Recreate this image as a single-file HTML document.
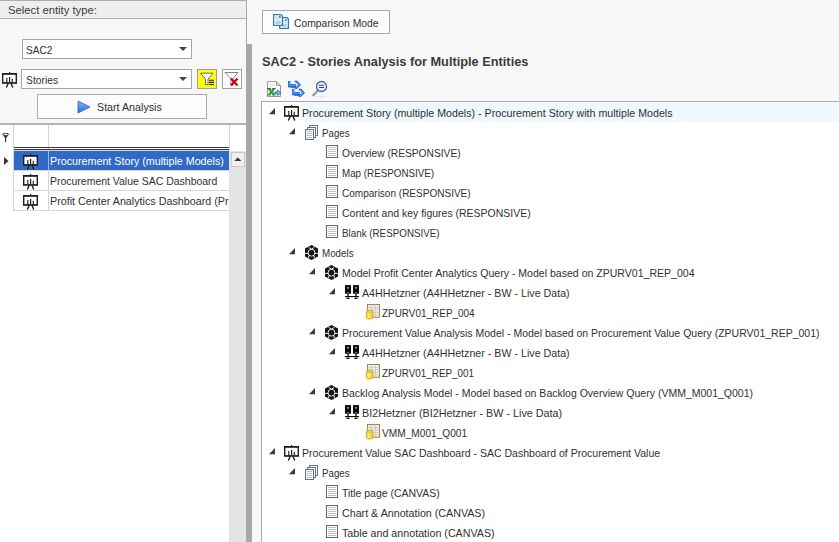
<!DOCTYPE html><html><head><meta charset="utf-8"><style>
*{margin:0;padding:0;box-sizing:border-box}
html,body{width:839px;height:542px;overflow:hidden;background:#f8f8f8;position:relative;font-family:"Liberation Sans",sans-serif}
.a{position:absolute}
.t{position:absolute;white-space:nowrap;transform-origin:0 0}
svg{position:absolute;display:block}

</style></head><body>
<div class="a" style="left:0;top:0;width:247px;height:124px;background:#f7f7f7;border-right:1px solid #a9a9a9"></div>
<div class="a" style="left:0;top:0;width:246px;height:19px;background:#eeeeee;border-top:1px solid #acacac;border-bottom:1px solid #acacac"></div>
<div class="t" style="left:8.00px;top:2px;line-height:17px;font:11px/17px 'Liberation Sans', sans-serif;color:#3c3c3c;transform:scaleX(1.0234);">Select entity type:</div>
<div class="a" style="left:22px;top:39px;width:170px;height:20px;background:#fff;border:1px solid #a5a5a5"></div>
<svg style="left:179px;top:47px" width="8" height="4"><path d="M0 0H8L4 4Z" fill="#444"/></svg>
<div class="t" style="left:26.30px;top:41px;line-height:18px;font:11px/18px 'Liberation Sans', sans-serif;color:#303030;transform:scaleX(0.9190);">SAC2</div>
<div class="a" style="left:21px;top:69px;width:171px;height:20px;background:#fff;border:1px solid #a5a5a5"></div>
<svg style="left:179px;top:77px" width="8" height="4"><path d="M0 0H8L4 4Z" fill="#444"/></svg>
<div class="t" style="left:25.60px;top:71px;line-height:18px;font:11px/18px 'Liberation Sans', sans-serif;color:#303030;transform:scaleX(0.9385);">Stories</div>
<svg style="left:2px;top:71px" width="16" height="17" viewBox="0 0 16 17"><g fill="#1e1e1e"><rect x="7" y="1" width="1.2" height="2"/><rect x="0" y="2" width="15" height="10.8"/></g><rect x="1.4" y="3.8" width="12.2" height="7.3" fill="#fff"/><g fill="#1e1e1e"><rect x="4.1" y="7" width="1.3" height="4.2"/><rect x="7" y="6" width="1.2" height="5.2"/><rect x="9.7" y="7.8" width="1.3" height="3.4"/></g><g fill="#888"><rect x="4.4" y="7.8" width="0.6" height="2.5"/><rect x="10" y="8.6" width="0.6" height="1.8"/></g><path d="M6 12.8 L4.6 16 M9.2 12.8 L10.6 16" stroke="#1e1e1e" stroke-width="1.4" stroke-linecap="round"/></svg>
<div class="a" style="left:197px;top:69px;width:20px;height:20px;background:#ffff00;border:1px solid #9b9bb8"></div>
<svg style="left:197px;top:69px" width="20" height="20" viewBox="0 0 20 20"><path d="M3.5 4.2 H16 L11 10 V15.5 H8.5 V10 Z" fill="#fff" stroke="#55557a" stroke-width="0.9"/><g stroke="#222" stroke-width="1.1"><path d="M12 11.3H17M12 13.4H17M12 15.5H17"/></g></svg>
<div class="a" style="left:222px;top:69px;width:20px;height:20px;background:#fff;border:1px solid #a0a0a0"></div>
<svg style="left:222px;top:69px" width="20" height="20" viewBox="0 0 20 20"><path d="M3 3.5 H16 L11 9.5 V16 H8.8 V9.5 Z" fill="#fff" stroke="#777" stroke-width="0.9"/><path d="M9 9.5 L15.5 16.5 M15.5 9.5 L9 16.5" stroke="#d40000" stroke-width="2.2"/></svg>
<div class="a" style="left:37px;top:94px;width:170px;height:25px;background:#fcfcfc;border:1px solid #ababab"></div>
<svg style="left:77px;top:100px" width="14" height="14" viewBox="0 0 14 14"><defs><linearGradient id="pg" x1="0" y1="0" x2="0" y2="1"><stop offset="0" stop-color="#7ab8f5"/><stop offset="1" stop-color="#2a72d8"/></linearGradient></defs><path d="M1 1 L13 7 L1 13 Z" fill="url(#pg)" stroke="#2a62c0" stroke-width="0.8"/></svg>
<div class="t" style="left:96.50px;top:97px;line-height:20px;font:11px/20px 'Liberation Sans', sans-serif;color:#303030;transform:scaleX(0.9727);">Start Analysis</div>
<div class="a" style="left:0;top:123px;width:246px;height:2px;background:#b4b4b4"></div>
<div class="a" style="left:0;top:125px;width:246px;height:417px;background:#fff"></div>
<div class="a" style="left:229px;top:151px;width:17px;height:391px;background:#e4e4e4"></div>
<div class="a" style="left:231px;top:152px;width:14px;height:15px;background:#efefef;border:1px solid #c8c8c8"></div>
<svg style="left:234px;top:157px" width="8" height="5"><path d="M0.3 4H7.3L3.8 0.6Z" fill="#333"/></svg>
<div class="a" style="left:13px;top:125px;width:1px;height:86px;background:#d4d4d4"></div>
<div class="a" style="left:48px;top:125px;width:1px;height:86px;background:#d4d4d4"></div>
<div class="a" style="left:229px;top:125px;width:1px;height:26px;background:#d4d4d4"></div>
<div class="a" style="left:14px;top:147px;width:215px;height:1px;background:#3a3a3a"></div>
<div class="a" style="left:14px;top:149px;width:215px;height:1px;background:#3a3a3a"></div>
<div class="a" style="left:14px;top:150px;width:215px;height:1px;background:#d8d8d8"></div>
<svg style="left:2px;top:133px" width="8" height="10" viewBox="0 0 8 10"><ellipse cx="3.6" cy="1.3" rx="3.2" ry="1.1" fill="none" stroke="#333" stroke-width="1"/><path d="M0.8 2 L3 5 V9 H4.2 V5 L6.4 2 Q3.6 3.3 0.8 2Z" fill="#333"/></svg>
<div class="a" style="left:14px;top:151px;width:215px;height:19px;background:#316ac5"></div>
<div class="a" style="left:48px;top:151px;width:1px;height:19px;background:#9ab4e0"></div>
<div class="a" style="left:14px;top:170px;width:215px;height:1px;background:#d8d8d8"></div>
<div class="a" style="left:14px;top:190px;width:215px;height:1px;background:#d8d8d8"></div>
<div class="a" style="left:14px;top:210px;width:215px;height:1px;background:#d8d8d8"></div>
<svg style="left:4px;top:157px" width="5" height="8"><path d="M0 0L4.5 4L0 8Z" fill="#333"/></svg>
<svg style="left:23px;top:153px" width="16" height="17" viewBox="0 0 16 17"><g fill="#1e1e1e"><rect x="7" y="1" width="1.2" height="2"/><rect x="0" y="2" width="15" height="10.8"/></g><rect x="1.4" y="3.8" width="12.2" height="7.3" fill="#fff"/><g fill="#1e1e1e"><rect x="4.1" y="7" width="1.3" height="4.2"/><rect x="7" y="6" width="1.2" height="5.2"/><rect x="9.7" y="7.8" width="1.3" height="3.4"/></g><g fill="#888"><rect x="4.4" y="7.8" width="0.6" height="2.5"/><rect x="10" y="8.6" width="0.6" height="1.8"/></g><path d="M6 12.8 L4.6 16 M9.2 12.8 L10.6 16" stroke="#1e1e1e" stroke-width="1.4" stroke-linecap="round"/></svg>
<svg style="left:23px;top:173px" width="16" height="17" viewBox="0 0 16 17"><g fill="#1e1e1e"><rect x="7" y="1" width="1.2" height="2"/><rect x="0" y="2" width="15" height="10.8"/></g><rect x="1.4" y="3.8" width="12.2" height="7.3" fill="#fff"/><g fill="#1e1e1e"><rect x="4.1" y="7" width="1.3" height="4.2"/><rect x="7" y="6" width="1.2" height="5.2"/><rect x="9.7" y="7.8" width="1.3" height="3.4"/></g><g fill="#888"><rect x="4.4" y="7.8" width="0.6" height="2.5"/><rect x="10" y="8.6" width="0.6" height="1.8"/></g><path d="M6 12.8 L4.6 16 M9.2 12.8 L10.6 16" stroke="#1e1e1e" stroke-width="1.4" stroke-linecap="round"/></svg>
<svg style="left:23px;top:193px" width="16" height="17" viewBox="0 0 16 17"><g fill="#1e1e1e"><rect x="7" y="1" width="1.2" height="2"/><rect x="0" y="2" width="15" height="10.8"/></g><rect x="1.4" y="3.8" width="12.2" height="7.3" fill="#fff"/><g fill="#1e1e1e"><rect x="4.1" y="7" width="1.3" height="4.2"/><rect x="7" y="6" width="1.2" height="5.2"/><rect x="9.7" y="7.8" width="1.3" height="3.4"/></g><g fill="#888"><rect x="4.4" y="7.8" width="0.6" height="2.5"/><rect x="10" y="8.6" width="0.6" height="1.8"/></g><path d="M6 12.8 L4.6 16 M9.2 12.8 L10.6 16" stroke="#1e1e1e" stroke-width="1.4" stroke-linecap="round"/></svg>
<div class="a" style="left:49px;top:151px;width:180px;height:60px;overflow:hidden">
<div class="t" style="left:1.00px;top:0px;line-height:20px;font:11px/20px 'Liberation Sans', sans-serif;color:#ffffff;transform:scaleX(0.9739);">Procurement Story (multiple Models)</div>
<div class="t" style="left:1.00px;top:20px;line-height:20px;font:11px/20px 'Liberation Sans', sans-serif;color:#303030;transform:scaleX(0.9518);">Procurement Value SAC Dashboard</div>
<div class="t" style="left:1.00px;top:40px;line-height:20px;font:11px/20px 'Liberation Sans', sans-serif;color:#303030;transform:scaleX(0.9771);">Profit Center Analytics Dashboard (Profit Center)</div>
</div>
<div class="a" style="left:246px;top:44px;width:6px;height:498px;background:#a8a8a8"></div>
<div class="a" style="left:262px;top:10px;width:128px;height:24px;background:#fdfdfd;border:1px solid #a9a9a9"></div>
<svg style="left:272px;top:13px" width="18" height="18" viewBox="0 0 18 18"><defs><linearGradient id="dg" x1="0" y1="0" x2="0" y2="1"><stop offset="0" stop-color="#bcd8ec"/><stop offset="0.6" stop-color="#e6f1f9"/><stop offset="0.66" stop-color="#a9d1e8"/><stop offset="1" stop-color="#a9d1e8"/></linearGradient></defs><path d="M7.7 4.7 H15 L16.4 6.1 V15.4 H7.7 Z" fill="#fff" stroke="#2b7cb8" stroke-width="1.3"/><rect x="10.2" y="7" width="4.6" height="6.8" fill="url(#dg)"/><path d="M13.2 6.2 Q13.8 7.2 14.7 7.3" stroke="#2b6ca8" stroke-width="1.1" fill="none"/><path d="M1.6 1.6 H8.8 L10.4 3.2 V12.4 H1.6 Z" fill="#fff" stroke="#2b7cb8" stroke-width="1.3"/><rect x="3.3" y="3.3" width="5.3" height="7.6" fill="url(#dg)"/><path d="M7.2 3.1 Q7.8 4.1 8.8 4.2" stroke="#2b6ca8" stroke-width="1.1" fill="none"/></svg>
<div class="t" style="left:293.50px;top:13px;line-height:20px;font:11px/20px 'Liberation Sans', sans-serif;color:#303030;transform:scaleX(0.9414);">Comparison Mode</div>
<div class="t" style="left:261.60px;top:52px;line-height:20px;font:bold 12.5px/20px 'Liberation Sans', sans-serif;color:#3a3a3a;transform:scaleX(1.0218);">SAC2 - Stories Analysis for Multiple Entities</div>
<svg style="left:265px;top:80px" width="18" height="18" viewBox="0 0 18 18"><path d="M2.5 1.5 H11.5 L15.5 5.5 V16.5 H2.5 Z" fill="#fbfbfb" stroke="#9a9a9a" stroke-width="1"/><path d="M11.5 1.5 V5.5 H15.5 Z" fill="#e4e4e4" stroke="#9a9a9a" stroke-width="1"/><rect x="4" y="3" width="5" height="4" fill="#efefef"/>
<path d="M2.2 8.6 H5.8 M7.2 8.6 H10.6 M2.2 15 H5.6 M7.4 15 H10.6" stroke="#1c7a1c" stroke-width="1.2"/><path d="M4 8.8 L9 14.8" stroke="#1c7a1c" stroke-width="2.4"/><path d="M9 8.8 L4 14.8" stroke="#1c7a1c" stroke-width="1.7"/><path d="M4.2 9.2 L8.8 14.4" stroke="#9be07a" stroke-width="0.8"/><path d="M10 12 H12.6 V10.2 L16 12.8 L12.6 15.4 V13.6 H10Z" fill="#5fd8f0" stroke="#1a70b0" stroke-width="0.9"/></svg>
<svg style="left:287px;top:80px" width="20" height="18" viewBox="0 0 20 18"><g id="ar"><path d="M1 1 H3.4 V4 H9 V6.8 H1 Z" fill="#1668e8"/><path d="M1.2 6.9 H9 M3.5 7.3 H9" stroke="#0838a8" stroke-width="0.7"/><path d="M2.2 1.5 V5.2 H9" stroke="#7fc0ff" stroke-width="0.7" fill="none"/><path d="M7.6 1 H10 L13.6 4.8 L10 8.6 H7.6 L11.2 4.8 Z" fill="#1668e8" stroke="#0a3cb0" stroke-width="0.5"/><path d="M9 1.8 L12 4.8 L9 7.8" stroke="#a8d8ff" stroke-width="0.7" fill="none"/></g><use href="#ar" x="4" y="8"/></svg>
<svg style="left:310px;top:79px" width="20" height="20" viewBox="0 0 20 20"><ellipse cx="11" cy="17.5" rx="6" ry="0.9" fill="#e6e6e6"/><path d="M8 11.5 L3.3 16.3" stroke="#8c8c8c" stroke-width="2.3" stroke-linecap="round"/><path d="M7.6 12 L3.6 16" stroke="#e8e8e8" stroke-width="0.7" stroke-dasharray="0.8 0.9"/><circle cx="11.5" cy="7.5" r="5" fill="#eef3fc" stroke="#3a5fe0" stroke-width="1.3"/><path d="M9 6.3 H14 M9 8.5 H14" stroke="#1a3fc0" stroke-width="1.1"/></svg>
<div class="a" style="left:261px;top:101px;width:578px;height:441px;background:#fff;border-left:1px solid #a9a9a9;border-top:1px solid #a9a9a9"></div>
<div class="a" style="left:302px;top:102px;width:537px;height:20px;background:#eff8fc"></div>
<svg style="left:269px;top:108px" width="7" height="7"><path d="M-0.1 6.3 H6 V0.1 Z" fill="#3a3a3a"/></svg>
<svg style="left:284px;top:104px" width="16" height="17" viewBox="0 0 16 17"><g fill="#1e1e1e"><rect x="7" y="1" width="1.2" height="2"/><rect x="0" y="2" width="15" height="10.8"/></g><rect x="1.4" y="3.8" width="12.2" height="7.3" fill="#fff"/><g fill="#1e1e1e"><rect x="4.1" y="7" width="1.3" height="4.2"/><rect x="7" y="6" width="1.2" height="5.2"/><rect x="9.7" y="7.8" width="1.3" height="3.4"/></g><g fill="#888"><rect x="4.4" y="7.8" width="0.6" height="2.5"/><rect x="10" y="8.6" width="0.6" height="1.8"/></g><path d="M6 12.8 L4.6 16 M9.2 12.8 L10.6 16" stroke="#1e1e1e" stroke-width="1.4" stroke-linecap="round"/></svg>
<div class="t" style="left:302.00px;top:103px;line-height:20px;font:11px/20px 'Liberation Sans', sans-serif;color:#303030;transform:scaleX(0.9698);">Procurement Story (multiple Models) - Procurement Story with multiple Models</div>
<svg style="left:289px;top:128px" width="7" height="7"><path d="M-0.1 6.3 H6 V0.1 Z" fill="#3a3a3a"/></svg>
<svg style="left:304px;top:124px" width="16" height="17" viewBox="0 0 16 17"><g stroke="#6b717e" stroke-width="1" fill="#fff"><rect x="5.5" y="1.5" width="8" height="10"/><rect x="3.5" y="3.5" width="8" height="10"/><rect x="1.5" y="5.5" width="8" height="10" fill="#f4f8fc"/></g><g stroke="#b4c0d0" stroke-width="1"><path d="M3 7.5h5M3 9.5h5M3 11.5h5M3 13.5h5"/></g></svg>
<div class="t" style="left:322.00px;top:123px;line-height:20px;font:11px/20px 'Liberation Sans', sans-serif;color:#303030;transform:scaleX(0.8836);">Pages</div>
<svg style="left:324px;top:144px" width="16" height="17" viewBox="0 0 16 17"><rect x="2.5" y="1.5" width="11" height="12" fill="#fff" stroke="#5f6470" stroke-width="1"/><g stroke="#b8c2d0" stroke-width="1"><path d="M4 3.5h8M4 5.5h8M4 7.5h8M4 9.5h8M4 11.5h8"/></g></svg>
<div class="t" style="left:342.00px;top:143px;line-height:20px;font:11px/20px 'Liberation Sans', sans-serif;color:#303030;transform:scaleX(0.9285);">Overview (RESPONSIVE)</div>
<svg style="left:324px;top:164px" width="16" height="17" viewBox="0 0 16 17"><rect x="2.5" y="1.5" width="11" height="12" fill="#fff" stroke="#5f6470" stroke-width="1"/><g stroke="#b8c2d0" stroke-width="1"><path d="M4 3.5h8M4 5.5h8M4 7.5h8M4 9.5h8M4 11.5h8"/></g></svg>
<div class="t" style="left:342.00px;top:163px;line-height:20px;font:11px/20px 'Liberation Sans', sans-serif;color:#303030;transform:scaleX(0.8915);">Map (RESPONSIVE)</div>
<svg style="left:324px;top:184px" width="16" height="17" viewBox="0 0 16 17"><rect x="2.5" y="1.5" width="11" height="12" fill="#fff" stroke="#5f6470" stroke-width="1"/><g stroke="#b8c2d0" stroke-width="1"><path d="M4 3.5h8M4 5.5h8M4 7.5h8M4 9.5h8M4 11.5h8"/></g></svg>
<div class="t" style="left:342.00px;top:183px;line-height:20px;font:11px/20px 'Liberation Sans', sans-serif;color:#303030;transform:scaleX(0.9108);">Comparison (RESPONSIVE)</div>
<svg style="left:324px;top:204px" width="16" height="17" viewBox="0 0 16 17"><rect x="2.5" y="1.5" width="11" height="12" fill="#fff" stroke="#5f6470" stroke-width="1"/><g stroke="#b8c2d0" stroke-width="1"><path d="M4 3.5h8M4 5.5h8M4 7.5h8M4 9.5h8M4 11.5h8"/></g></svg>
<div class="t" style="left:342.00px;top:203px;line-height:20px;font:11px/20px 'Liberation Sans', sans-serif;color:#303030;transform:scaleX(0.9523);">Content and key figures (RESPONSIVE)</div>
<svg style="left:324px;top:224px" width="16" height="17" viewBox="0 0 16 17"><rect x="2.5" y="1.5" width="11" height="12" fill="#fff" stroke="#5f6470" stroke-width="1"/><g stroke="#b8c2d0" stroke-width="1"><path d="M4 3.5h8M4 5.5h8M4 7.5h8M4 9.5h8M4 11.5h8"/></g></svg>
<div class="t" style="left:342.00px;top:223px;line-height:20px;font:11px/20px 'Liberation Sans', sans-serif;color:#303030;transform:scaleX(0.8919);">Blank (RESPONSIVE)</div>
<svg style="left:289px;top:248px" width="7" height="7"><path d="M-0.1 6.3 H6 V0.1 Z" fill="#3a3a3a"/></svg>
<svg style="left:304px;top:244px" width="16" height="17" viewBox="0 0 16 17"><path d="M7.5 1 L14 4.6 L14 12.4 L7.5 16 L1 12.4 L1 4.6 Z" fill="#151515"/><g stroke="#fff" stroke-width="0.9" fill="none"><circle cx="7.5" cy="8.7" r="3.4"/><path d="M4.6 3.3 L7.5 5.1 L10.4 3.3 M1 9.4 L4.1 9.4 M10.9 9.4 L14 9.4 M5 11.5 L4.6 14 M10 11.5 L10.4 14"/></g><circle cx="7.5" cy="8.7" r="2.5" fill="#151515"/></svg>
<div class="t" style="left:322.00px;top:243px;line-height:20px;font:11px/20px 'Liberation Sans', sans-serif;color:#303030;transform:scaleX(0.8899);">Models</div>
<svg style="left:309px;top:268px" width="7" height="7"><path d="M-0.1 6.3 H6 V0.1 Z" fill="#3a3a3a"/></svg>
<svg style="left:324px;top:264px" width="16" height="17" viewBox="0 0 16 17"><path d="M7.5 1 L14 4.6 L14 12.4 L7.5 16 L1 12.4 L1 4.6 Z" fill="#151515"/><g stroke="#fff" stroke-width="0.9" fill="none"><circle cx="7.5" cy="8.7" r="3.4"/><path d="M4.6 3.3 L7.5 5.1 L10.4 3.3 M1 9.4 L4.1 9.4 M10.9 9.4 L14 9.4 M5 11.5 L4.6 14 M10 11.5 L10.4 14"/></g><circle cx="7.5" cy="8.7" r="2.5" fill="#151515"/></svg>
<div class="t" style="left:342.00px;top:263px;line-height:20px;font:11px/20px 'Liberation Sans', sans-serif;color:#303030;transform:scaleX(0.9583);">Model Profit Center Analytics Query - Model based on ZPURV01_REP_004</div>
<svg style="left:329px;top:288px" width="7" height="7"><path d="M-0.1 6.3 H6 V0.1 Z" fill="#3a3a3a"/></svg>
<svg style="left:344px;top:284px" width="16" height="17" viewBox="0 0 16 17"><g fill="#0a0a0a"><rect x="1" y="1" width="6" height="8.7" rx="0.8"/><rect x="9" y="1" width="6" height="8.7" rx="0.8"/><rect x="3.4" y="9.5" width="1.3" height="3"/><rect x="11.4" y="9.5" width="1.3" height="3"/><rect x="1" y="12" width="14" height="1.1"/><ellipse cx="4" cy="14.3" rx="2" ry="0.8"/><ellipse cx="12" cy="14.3" rx="2" ry="0.8"/></g><g fill="#8a8a8a"><rect x="3" y="2.8" width="2" height="2"/><rect x="11" y="2.8" width="2" height="2"/><rect x="3" y="7.9" width="2" height="0.8"/><rect x="11" y="7.9" width="2" height="0.8"/></g></svg>
<div class="t" style="left:362.00px;top:283px;line-height:20px;font:11px/20px 'Liberation Sans', sans-serif;color:#303030;transform:scaleX(0.9705);">A4HHetzner (A4HHetzner - BW - Live Data)</div>
<svg style="left:364px;top:304px" width="17" height="17" viewBox="0 0 17 17"><rect x="3.5" y="0.5" width="12" height="12.8" fill="#e2effc" stroke="#a3824e" stroke-width="1"/><g stroke="#d4c4a4" stroke-width="0.7"><path d="M3.5 3.5H15.5M3.5 6H15.5M3.5 8.5H15.5M3.5 11H15.5M7.5 0.5V13.3M11.5 0.5V13.3"/></g><path d="M2.4 7.2 Q2.4 6.2 5.6 6.2 Q8.8 6.2 8.8 7.2 V14 Q8.8 15 5.6 15 Q2.4 15 2.4 14 Z" fill="#f8dc3a" stroke="#c9961a" stroke-width="0.8"/><path d="M2.8 7.8 Q5.6 8.8 8.4 7.8" stroke="#d9a820" stroke-width="0.7" fill="none"/><rect x="3.5" y="9" width="2" height="5" fill="#fff7b0" opacity="0.6"/></svg>
<div class="t" style="left:382.00px;top:303px;line-height:20px;font:11px/20px 'Liberation Sans', sans-serif;color:#303030;transform:scaleX(0.9033);">ZPURV01_REP_004</div>
<svg style="left:309px;top:328px" width="7" height="7"><path d="M-0.1 6.3 H6 V0.1 Z" fill="#3a3a3a"/></svg>
<svg style="left:324px;top:324px" width="16" height="17" viewBox="0 0 16 17"><path d="M7.5 1 L14 4.6 L14 12.4 L7.5 16 L1 12.4 L1 4.6 Z" fill="#151515"/><g stroke="#fff" stroke-width="0.9" fill="none"><circle cx="7.5" cy="8.7" r="3.4"/><path d="M4.6 3.3 L7.5 5.1 L10.4 3.3 M1 9.4 L4.1 9.4 M10.9 9.4 L14 9.4 M5 11.5 L4.6 14 M10 11.5 L10.4 14"/></g><circle cx="7.5" cy="8.7" r="2.5" fill="#151515"/></svg>
<div class="t" style="left:342.00px;top:323px;line-height:20px;font:11px/20px 'Liberation Sans', sans-serif;color:#303030;transform:scaleX(0.9548);">Procurement Value Analysis Model - Model based on Procurement Value Query (ZPURV01_REP_001)</div>
<svg style="left:329px;top:348px" width="7" height="7"><path d="M-0.1 6.3 H6 V0.1 Z" fill="#3a3a3a"/></svg>
<svg style="left:344px;top:344px" width="16" height="17" viewBox="0 0 16 17"><g fill="#0a0a0a"><rect x="1" y="1" width="6" height="8.7" rx="0.8"/><rect x="9" y="1" width="6" height="8.7" rx="0.8"/><rect x="3.4" y="9.5" width="1.3" height="3"/><rect x="11.4" y="9.5" width="1.3" height="3"/><rect x="1" y="12" width="14" height="1.1"/><ellipse cx="4" cy="14.3" rx="2" ry="0.8"/><ellipse cx="12" cy="14.3" rx="2" ry="0.8"/></g><g fill="#8a8a8a"><rect x="3" y="2.8" width="2" height="2"/><rect x="11" y="2.8" width="2" height="2"/><rect x="3" y="7.9" width="2" height="0.8"/><rect x="11" y="7.9" width="2" height="0.8"/></g></svg>
<div class="t" style="left:362.00px;top:343px;line-height:20px;font:11px/20px 'Liberation Sans', sans-serif;color:#303030;transform:scaleX(0.9705);">A4HHetzner (A4HHetzner - BW - Live Data)</div>
<svg style="left:364px;top:364px" width="17" height="17" viewBox="0 0 17 17"><rect x="3.5" y="0.5" width="12" height="12.8" fill="#e2effc" stroke="#a3824e" stroke-width="1"/><g stroke="#d4c4a4" stroke-width="0.7"><path d="M3.5 3.5H15.5M3.5 6H15.5M3.5 8.5H15.5M3.5 11H15.5M7.5 0.5V13.3M11.5 0.5V13.3"/></g><path d="M2.4 7.2 Q2.4 6.2 5.6 6.2 Q8.8 6.2 8.8 7.2 V14 Q8.8 15 5.6 15 Q2.4 15 2.4 14 Z" fill="#f8dc3a" stroke="#c9961a" stroke-width="0.8"/><path d="M2.8 7.8 Q5.6 8.8 8.4 7.8" stroke="#d9a820" stroke-width="0.7" fill="none"/><rect x="3.5" y="9" width="2" height="5" fill="#fff7b0" opacity="0.6"/></svg>
<div class="t" style="left:382.00px;top:363px;line-height:20px;font:11px/20px 'Liberation Sans', sans-serif;color:#303030;transform:scaleX(0.8984);">ZPURV01_REP_001</div>
<svg style="left:309px;top:388px" width="7" height="7"><path d="M-0.1 6.3 H6 V0.1 Z" fill="#3a3a3a"/></svg>
<svg style="left:324px;top:384px" width="16" height="17" viewBox="0 0 16 17"><path d="M7.5 1 L14 4.6 L14 12.4 L7.5 16 L1 12.4 L1 4.6 Z" fill="#151515"/><g stroke="#fff" stroke-width="0.9" fill="none"><circle cx="7.5" cy="8.7" r="3.4"/><path d="M4.6 3.3 L7.5 5.1 L10.4 3.3 M1 9.4 L4.1 9.4 M10.9 9.4 L14 9.4 M5 11.5 L4.6 14 M10 11.5 L10.4 14"/></g><circle cx="7.5" cy="8.7" r="2.5" fill="#151515"/></svg>
<div class="t" style="left:342.00px;top:383px;line-height:20px;font:11px/20px 'Liberation Sans', sans-serif;color:#303030;transform:scaleX(0.9550);">Backlog Analysis Model - Model based on Backlog Overview Query (VMM_M001_Q001)</div>
<svg style="left:329px;top:408px" width="7" height="7"><path d="M-0.1 6.3 H6 V0.1 Z" fill="#3a3a3a"/></svg>
<svg style="left:344px;top:404px" width="16" height="17" viewBox="0 0 16 17"><g fill="#0a0a0a"><rect x="1" y="1" width="6" height="8.7" rx="0.8"/><rect x="9" y="1" width="6" height="8.7" rx="0.8"/><rect x="3.4" y="9.5" width="1.3" height="3"/><rect x="11.4" y="9.5" width="1.3" height="3"/><rect x="1" y="12" width="14" height="1.1"/><ellipse cx="4" cy="14.3" rx="2" ry="0.8"/><ellipse cx="12" cy="14.3" rx="2" ry="0.8"/></g><g fill="#8a8a8a"><rect x="3" y="2.8" width="2" height="2"/><rect x="11" y="2.8" width="2" height="2"/><rect x="3" y="7.9" width="2" height="0.8"/><rect x="11" y="7.9" width="2" height="0.8"/></g></svg>
<div class="t" style="left:362.00px;top:403px;line-height:20px;font:11px/20px 'Liberation Sans', sans-serif;color:#303030;transform:scaleX(0.9803);">BI2Hetzner (BI2Hetzner - BW - Live Data)</div>
<svg style="left:364px;top:424px" width="17" height="17" viewBox="0 0 17 17"><rect x="3.5" y="0.5" width="12" height="12.8" fill="#e2effc" stroke="#a3824e" stroke-width="1"/><g stroke="#d4c4a4" stroke-width="0.7"><path d="M3.5 3.5H15.5M3.5 6H15.5M3.5 8.5H15.5M3.5 11H15.5M7.5 0.5V13.3M11.5 0.5V13.3"/></g><path d="M2.4 7.2 Q2.4 6.2 5.6 6.2 Q8.8 6.2 8.8 7.2 V14 Q8.8 15 5.6 15 Q2.4 15 2.4 14 Z" fill="#f8dc3a" stroke="#c9961a" stroke-width="0.8"/><path d="M2.8 7.8 Q5.6 8.8 8.4 7.8" stroke="#d9a820" stroke-width="0.7" fill="none"/><rect x="3.5" y="9" width="2" height="5" fill="#fff7b0" opacity="0.6"/></svg>
<div class="t" style="left:382.00px;top:423px;line-height:20px;font:11px/20px 'Liberation Sans', sans-serif;color:#303030;transform:scaleX(0.9218);">VMM_M001_Q001</div>
<svg style="left:269px;top:448px" width="7" height="7"><path d="M-0.1 6.3 H6 V0.1 Z" fill="#3a3a3a"/></svg>
<svg style="left:284px;top:444px" width="16" height="17" viewBox="0 0 16 17"><g fill="#1e1e1e"><rect x="7" y="1" width="1.2" height="2"/><rect x="0" y="2" width="15" height="10.8"/></g><rect x="1.4" y="3.8" width="12.2" height="7.3" fill="#fff"/><g fill="#1e1e1e"><rect x="4.1" y="7" width="1.3" height="4.2"/><rect x="7" y="6" width="1.2" height="5.2"/><rect x="9.7" y="7.8" width="1.3" height="3.4"/></g><g fill="#888"><rect x="4.4" y="7.8" width="0.6" height="2.5"/><rect x="10" y="8.6" width="0.6" height="1.8"/></g><path d="M6 12.8 L4.6 16 M9.2 12.8 L10.6 16" stroke="#1e1e1e" stroke-width="1.4" stroke-linecap="round"/></svg>
<div class="t" style="left:302.00px;top:443px;line-height:20px;font:11px/20px 'Liberation Sans', sans-serif;color:#303030;transform:scaleX(0.9581);">Procurement Value SAC Dashboard - SAC Dashboard of Procurement Value</div>
<svg style="left:289px;top:468px" width="7" height="7"><path d="M-0.1 6.3 H6 V0.1 Z" fill="#3a3a3a"/></svg>
<svg style="left:304px;top:464px" width="16" height="17" viewBox="0 0 16 17"><g stroke="#6b717e" stroke-width="1" fill="#fff"><rect x="5.5" y="1.5" width="8" height="10"/><rect x="3.5" y="3.5" width="8" height="10"/><rect x="1.5" y="5.5" width="8" height="10" fill="#f4f8fc"/></g><g stroke="#b4c0d0" stroke-width="1"><path d="M3 7.5h5M3 9.5h5M3 11.5h5M3 13.5h5"/></g></svg>
<div class="t" style="left:322.00px;top:463px;line-height:20px;font:11px/20px 'Liberation Sans', sans-serif;color:#303030;transform:scaleX(0.8836);">Pages</div>
<svg style="left:324px;top:484px" width="16" height="17" viewBox="0 0 16 17"><rect x="2.5" y="1.5" width="11" height="12" fill="#fff" stroke="#5f6470" stroke-width="1"/><g stroke="#b8c2d0" stroke-width="1"><path d="M4 3.5h8M4 5.5h8M4 7.5h8M4 9.5h8M4 11.5h8"/></g></svg>
<div class="t" style="left:342.00px;top:483px;line-height:20px;font:11px/20px 'Liberation Sans', sans-serif;color:#303030;transform:scaleX(0.9506);">Title page (CANVAS)</div>
<svg style="left:324px;top:504px" width="16" height="17" viewBox="0 0 16 17"><rect x="2.5" y="1.5" width="11" height="12" fill="#fff" stroke="#5f6470" stroke-width="1"/><g stroke="#b8c2d0" stroke-width="1"><path d="M4 3.5h8M4 5.5h8M4 7.5h8M4 9.5h8M4 11.5h8"/></g></svg>
<div class="t" style="left:342.00px;top:503px;line-height:20px;font:11px/20px 'Liberation Sans', sans-serif;color:#303030;transform:scaleX(0.9722);">Chart &amp; Annotation (CANVAS)</div>
<svg style="left:324px;top:524px" width="16" height="17" viewBox="0 0 16 17"><rect x="2.5" y="1.5" width="11" height="12" fill="#fff" stroke="#5f6470" stroke-width="1"/><g stroke="#b8c2d0" stroke-width="1"><path d="M4 3.5h8M4 5.5h8M4 7.5h8M4 9.5h8M4 11.5h8"/></g></svg>
<div class="t" style="left:342.00px;top:523px;line-height:20px;font:11px/20px 'Liberation Sans', sans-serif;color:#303030;transform:scaleX(0.9726);">Table and annotation (CANVAS)</div>
</body></html>
